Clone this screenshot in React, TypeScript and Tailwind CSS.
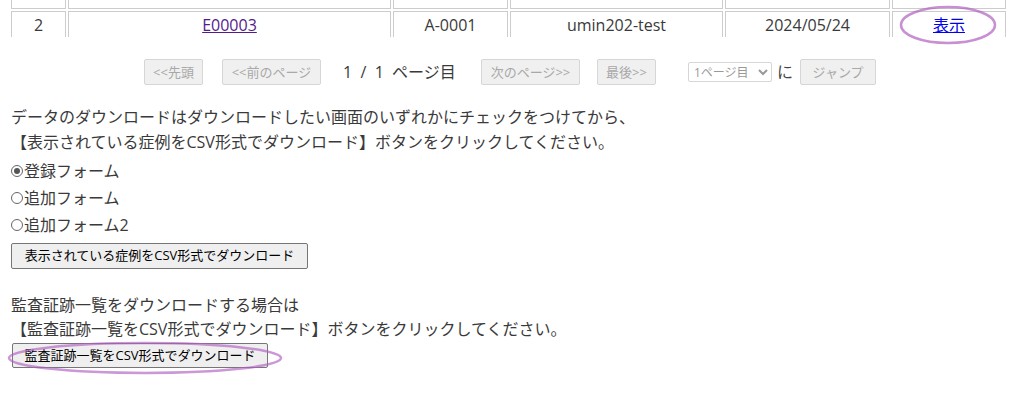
import React from 'react';

const font = 'font-["Open_Sans","Noto_Sans_CJK_JP",sans-serif]';

function PagerButton({ label, w }: { label: string; w: string }) {
  return (
    <button
      disabled
      className={`h-[26px] ${w} rounded-[2px] border border-[#d6d6d6] bg-[#f0f0f0] text-[13px] text-[#a8a8a8] leading-none`}
    >
      {label}
    </button>
  );
}

function Radio({ checked, label }: { checked?: boolean; label: string }) {
  return (
    <div className="flex h-[27px] items-center">
      <span className="mr-[1px] flex h-[12px] w-[12px] items-center justify-center rounded-full border border-[#666]">
        {checked && <span className="h-[6px] w-[6px] rounded-full bg-[#555]" />}
      </span>
      <span>{label}</span>
    </div>
  );
}

export default function App() {
  const cell = 'border border-[#cccccc] text-center h-[28px] p-0';
  return (
    <div className={`relative h-[401px] w-[1015px] overflow-hidden bg-white text-[16px] text-[#3a3a3a] ${font}`}>
      {/* table, first row cut off above */}
      <div className="h-[37px] overflow-hidden">
        <table className="ml-[9px] -mt-[21px] w-[999px] table-fixed border-separate border-spacing-[2px]">
          <colgroup>
            <col className="w-[55px]" />
            <col className="w-[323px]" />
            <col className="w-[115px]" />
            <col className="w-[213px]" />
            <col className="w-[165px]" />
            <col className="w-[114px]" />
          </colgroup>
          <tbody>
            <tr>
              <td className={cell}></td>
              <td className={cell}></td>
              <td className={cell}></td>
              <td className={cell}></td>
              <td className={cell}></td>
              <td className={cell}></td>
            </tr>
            <tr>
              <td className={cell}>2</td>
              <td className={cell}>
                <a href="#" className="text-[#551a8b] underline">E00003</a>
              </td>
              <td className={cell}>A-0001</td>
              <td className={cell}>umin202-test</td>
              <td className={cell}>2024/05/24</td>
              <td className={cell}>
                <a href="#" className="text-[#0000ee] underline">表示</a>
              </td>
            </tr>
          </tbody>
        </table>
      </div>

      {/* pager */}
      <div className="mt-[22px] flex h-[26px] items-center pl-[144px]">
        <PagerButton label="<<先頭" w="w-[59px]" />
        <div className="w-[19px]" />
        <PagerButton label="<<前のページ" w="w-[99px]" />
        <span className="ml-[22px] w-[118px] whitespace-pre text-[16px]">1  /  1  ページ目</span>
        <div className="w-[20px]" />
        <PagerButton label="次のページ>>" w="w-[99px]" />
        <div className="w-[17px]" />
        <PagerButton label="最後>>" w="w-[59px]" />
        <select
          disabled
          className="ml-[32px] h-[20px] w-[84px] rounded-[2px] border border-[#d6d6d6] bg-white px-[1px] text-[12px] text-[#999]"
        >
          <option>1ページ目</option>
        </select>
        <span className="ml-[5px] text-[16px] text-[#444]">に</span>
        <div className="w-[7px]" />
        <PagerButton label="ジャンプ" w="w-[76px]" />
      </div>

      {/* download section */}
      <div className="mt-[20px] pl-[11px]">
        <p className="leading-[25px]">データのダウンロードはダウンロードしたい画面のいずれかにチェックをつけてから、</p>
        <p className="leading-[25px]">【表示されている症例をCSV形式でダウンロード】ボタンをクリックしてください。</p>
        <div className="mt-[2px]">
          <Radio checked label="登録フォーム" />
          <Radio label="追加フォーム" />
          <Radio label="追加フォーム2" />
        </div>
        <button className="mt-[5px] h-[26px] w-[297px] rounded-[2px] border border-[#767676] bg-[#efefef] text-[13px] text-black">
          表示されている症例をCSV形式でダウンロード
        </button>

        <p className="mt-[24px] leading-[24px]">監査証跡一覧をダウンロードする場合は</p>
        <p className="leading-[24px]">【監査証跡一覧をCSV形式でダウンロード】ボタンをクリックしてください。</p>
        <button className="ml-[1px] mt-[2px] h-[25px] w-[256px] rounded-[2px] border border-[#767676] bg-[#efefef] text-[13px] text-black">
          監査証跡一覧をCSV形式でダウンロード
        </button>
      </div>

      {/* hand-drawn annotations */}
      <svg className="pointer-events-none absolute left-0 top-0" width="1015" height="401">
        <ellipse cx="948" cy="25" rx="47" ry="18" fill="none" stroke="#b060c0" strokeOpacity="0.7" strokeWidth="2.5" />
        <ellipse cx="145" cy="358" rx="136" ry="15" fill="none" stroke="#b060c0" strokeOpacity="0.65" strokeWidth="2.5" />
      </svg>
    </div>
  );
}
